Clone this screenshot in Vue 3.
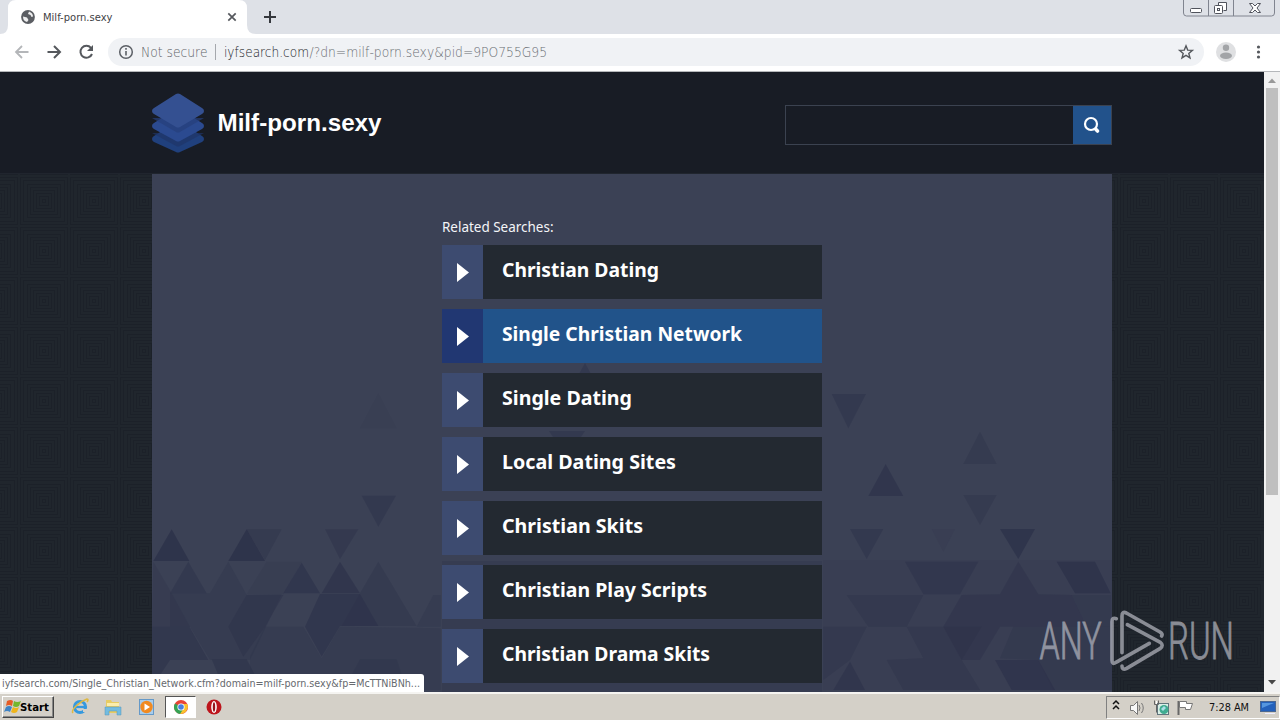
<script setup>
const results = [
  { label: 'Christian Dating', width: 157 },
  { label: 'Single Christian Network', width: 240, active: true },
  { label: 'Single Dating', width: 130 },
  { label: 'Local Dating Sites', width: 174 },
  { label: 'Christian Skits', width: 141 },
  { label: 'Christian Play Scripts', width: 205 },
  { label: 'Christian Drama Skits', width: 208 },
]
const rings = [1, 4, 8, 11, 14, 17, 20, 23]
const leftShapes = [
  ['685,100 740,205 630,205', 0.1], ['635,407 738,407 685,500', 0.5],
  ['65,508 118,603 10,603', 0.8], ['290,508 345,603 235,603', 0.8], ['290,508 395,508 345,600', 0.4],
  ['525,508 625,508 570,598', 0.45],
  ['10,605 65,700 120,800 6,800', 0.25], ['115,605 170,700 60,700', 0.5], ['235,605 290,705 395,703 300,900 180,900 120,800 60,800 60,700 180,700', 0.3],
  ['350,605 455,605 400,703 290,703', 0.18], ['455,608 510,700 400,700', 0.6], ['570,605 630,700 515,700', 0.65],
  ['685,605 800,798 575,798 630,700', 0.35], ['290,705 400,705 345,800 280,890 235,800', 0.45],
  ['510,702 630,702 685,798 570,798 515,890 465,800', 0.6], ['850,705 872,705 872,800 800,800', 0.3],
  ['6,800 118,800 175,900 60,900 30,945 6,945', 0.55], ['185,898 290,898 315,945 205,945', 0.55],
  ['345,800 460,800 515,895 570,800 872,805 872,990 300,990 300,890', 0.3], ['630,898 740,898 770,990 580,990', 0.3],
]
const rightShapes = [
  ['35,102 138,102 85,205', 0.5], ['197,312 250,408 145,408', 0.65], ['480,215 530,312 430,312', 0.4],
  ['430,405 530,405 480,495', 0.4], ['90,507 190,507 140,597', 0.5], ['540,507 645,507 595,597', 0.75],
  ['335,507 405,507 370,575', 0.15], ['255,605 475,605 420,703 310,703', 0.5], ['595,605 655,703 755,705 800,800 540,800 480,900 425,900 370,800 425,705 540,703', 0.45],
  ['710,605 825,605 872,700 765,700', 0.75], ['655,705 872,705 872,800 800,800 755,705', 0.3],
  ['80,705 310,705 260,800 145,800', 0.35], ['10,800 140,800 90,900 10,960', 0.4], ['260,800 485,800 425,900 480,990 250,990 200,900 310,895', 0.4],
  ['580,800 876,800 876,990 700,990 655,900 540,895', 0.3], ['90,905 135,990 40,990', 0.55], ['525,900 655,900 705,990 575,990', 0.6],
  ['10,600 876,600 876,990 10,990', 0.15],
]
</script>

<template>
  <div class="screen">
    <div class="tabs">
      <svg class="tabshape" width="290" height="34">
        <path d="M0 34Q8 34 8 25V8Q8 0 16 0H239Q247 0 247 8V25Q247 34 256 34Z" fill="#fff" />
        <circle cx="28" cy="17" r="6.9" fill="#5b5e63" />
        <path d="M23 16.500l4 1 1.500 2.500-1.500 2q-4-1-4-5.500zM29 11.500l-1 2.500 2.500 1 1 2 1.500-.500q0-3.500-4-5z" fill="#fff" opacity=".9" />
        <text x="43" y="21" font-size="11" textLength="69.5" lengthAdjust="spacingAndGlyphs" fill="#3f4246">Milf-porn.sexy</text>
        <path d="M228.3 13.3l7.4 7.4M235.7 13.3l-7.4 7.4" stroke="#55585d" stroke-width="1.7" />
        <path d="M264 17h12M270 11v12" stroke="#35383d" stroke-width="2" />
      </svg>
      <svg class="winctl" width="96" height="18" fill="none">
        <path d="M.5 0v13q0 3 3 3h85q3 0 3-3V0M25.500 0v16M50.500 0v16" stroke="#80848f" />
        <rect x="7.500" y="8.500" width="11" height="4" rx="1" fill="#fff" stroke="#50535c" />
        <path d="M35.500 5.500v-3h8v8h-3" fill="#fff" stroke="#50535c" />
        <rect x="31.500" y="5.500" width="8" height="8" rx="1" fill="#fff" stroke="#50535c" />
        <rect x="34.500" y="8.500" width="2" height="2" stroke="#50535c" />
        <path d="M66.500 3.500h3l2.500 2.500 2.500-2.500h3l-3.500 4.500 3.500 4.500h-3L72 10l-2.500 2.500h-3L70 8z" fill="#fff" stroke="#50535c" />
      </svg>
    </div>

    <div class="toolbar">
      <svg class="nav" width="108" height="37" fill="none">
        <path d="M28.500 18H16.500M22 12l-6 6 6 6" stroke="#b4b6b9" stroke-width="1.8" />
        <path d="M47.500 18H60M54 12l6 6-6 6" stroke="#55585d" stroke-width="2" />
        <path d="M91 13.800A6 6 0 1 0 92 20" stroke="#55585d" stroke-width="2" />
        <path d="M93 11v6h-6z" fill="#55585d" />
      </svg>
      <div class="address">
        <svg width="1096" height="28">
          <circle cx="18" cy="14" r="6.300" fill="none" stroke="#5c6066" stroke-width="1.500" />
          <path d="M18 13v4.500M18 10v1.700" stroke="#5c6066" stroke-width="1.600" />
          <text x="33" y="19" font-size="13.500" textLength="66.500" lengthAdjust="spacingAndGlyphs" fill="#5e6268">Not secure</text>
          <path d="M107.500 6v16" stroke="#a5a8ad" />
          <text x="116" y="19" font-size="13.500" textLength="85" lengthAdjust="spacingAndGlyphs" fill="#202327">iyfsearch.com</text>
          <text x="201.500" y="19" font-size="13.500" textLength="237.500" lengthAdjust="spacingAndGlyphs" fill="#696d73">/?dn=milf-porn.sexy&amp;pid=9PO755G95</text>
          <path d="M1078 7.800l1.700 4.300 4.700.3-3.600 3 1.200 4.500-4-2.500-4 2.500 1.200-4.500-3.600-3 4.700-.3z" fill="none" stroke="#55585d" stroke-width="1.400" />
        </svg>
      </div>
      <svg class="menu" width="76" height="37">
        <circle cx="22" cy="18" r="10" fill="#dfe0e2" />
        <circle cx="22" cy="13.800" r="3.200" fill="#a2a4a7" />
        <ellipse cx="22" cy="21.700" rx="6" ry="3.200" fill="#a2a4a7" />
        <g fill="#55585d"><circle cx="54.500" cy="13" r="1.600" /><circle cx="54.500" cy="18" r="1.600" /><circle cx="54.500" cy="23" r="1.600" /></g>
      </svg>
    </div>

    <div class="viewport">
      <div class="page">
        <header class="header">
          <div class="brand">
            <svg width="260" height="64">
              <path d="M0 47q0-2 2-3l22-14q2-1 4 0l22 14q2 1 2 3t-2 3L28 60q-2 1-4 0L2 50q-2-1-2-3z" fill="#20407d" />
              <path d="M0 41h52L28 54q-2 1-4 0z" fill="#203568" opacity=".7" />
              <path d="M0 34q0-2 2-3l22-14q2-1 4 0l22 14q2 1 2 3t-2 3L28 49q-2 1-4 0L2 37q-2-1-2-3z" fill="#2b4a90" />
              <path d="M0 26h52L28 40q-2 1-4 0z" fill="#263f7a" opacity=".7" />
              <path d="M0 19q0-2 2-3L24 2q2-1 4 0l22 14q2 1 2 3t-2 3L28 35q-2 1-4 0L2 22q-2-1-2-3z" fill="#345091" />
              <text class="site" x="65.500" y="39" font-size="24" textLength="164" lengthAdjust="spacingAndGlyphs" fill="#fff">Milf-porn.sexy</text>
            </svg>
          </div>
          <div class="search">
            <div class="field"></div>
            <div class="go">
              <svg width="39" height="38" fill="none" stroke="#fff">
                <circle cx="18" cy="18" r="6" stroke-width="2.200" />
                <path d="M23 23.500l1.500 1.500" stroke-width="3.600" stroke-linecap="round" />
              </svg>
            </div>
          </div>
        </header>
        <div class="body">
          <svg class="texture" width="1264" height="518">
            <defs>
              <pattern id="squares" x="19" y="2" width="50" height="50" patternUnits="userSpaceOnUse">
                <rect width="50" height="50" fill="#20262d" />
                <rect v-for="r in rings" :key="r" :x="r + 0.5" :y="r + 0.5" :width="49 - 2 * r" :height="49 - 2 * r" fill="none" stroke="#1c2129" />
              </pattern>
            </defs>
            <rect width="1264" height="518" fill="url(#squares)" />
          </svg>
          <main class="panel">
            <svg class="shards" width="960" height="518" fill="#2c3149">
              <g transform="translate(-2 186) scale(.33333)">
                <polygon v-for="(s, i) in leftShapes" :key="i" :points="s[0]" :opacity="s[1]" />
              </g>
              <g transform="translate(668 186) scale(.33333)">
                <polygon v-for="(s, i) in rightShapes" :key="i" :points="s[0]" :opacity="s[1]" />
              </g>
              <path d="M290 387h380v131H290z" opacity=".28" />
              <path d="M433 189l6 11h-12zM397 257h36l-4 6h-28z" opacity=".5" />
            </svg>
            <div class="list">
              <svg class="related" width="380" height="26"><text x="0" y="15" font-size="14" textLength="111.500" lengthAdjust="spacingAndGlyphs" fill="#f4f5f8">Related Searches:</text></svg>
              <div v-for="r in results" :key="r.label" class="row" :class="{ active: r.active }">
                <div class="arrow"><svg width="41" height="54"><path d="M15 18l12 9.500L15 37z" fill="#fff" /></svg></div>
                <svg class="label" width="339" height="54"><text x="19" y="32" font-size="20" :textLength="r.width" lengthAdjust="spacingAndGlyphs" fill="#fff">{{ r.label }}</text></svg>
              </div>
            </div>
          </main>
        </div>
      </div>
      <div class="scrollbar">
        <svg width="16" height="15"><path d="M4 11l4-4.500 4 4.500z" fill="#999" /></svg>
        <div class="thumb"></div>
        <svg class="down" width="16" height="15"><path d="M4 4h8l-4 4.500z" fill="#484848" /></svg>
      </div>
      <svg class="watermark" width="224" height="76">
        <g fill="#b3b5be" stroke="#b3b5be" stroke-width=".9">
          <text x="3.500" y="51" font-size="51.500" textLength="62" lengthAdjust="spacingAndGlyphs">ANY</text>
          <text x="132" y="51" font-size="51.500" textLength="66" lengthAdjust="spacingAndGlyphs">RUN</text>
        </g>
        <g transform="translate(-36 -18) scale(.33333)" fill="none" stroke="#b3b5be" stroke-width="11" stroke-linejoin="round" stroke-linecap="round">
          <path d="M366 188V78q0-15 13-9l101 57q9 6 5 12" />
          <path d="M349 86q-13-5-13 9v116q0 14 12 6l100-57" />
          <path d="M366 228q0 14 14 7l101-60q11-9 0-18L382 104" />
        </g>
      </svg>
      <div class="status"><svg width="424" height="18"><text x="2" y="13" font-size="10.500" textLength="418" lengthAdjust="spacingAndGlyphs" fill="#66696e">iyfsearch.com/Single_Christian_Network.cfm?domain=milf-porn.sexy&amp;fp=McTTNiBNh...</text></svg></div>
    </div>

    <footer class="taskbar">
      <div class="start">
        <svg width="50" height="20">
          <path d="M4 4q4-2 6 0L9 9Q6 7 3 9z" fill="#e65c25" /><path d="M11 4q3 2 7 0l-2 5q-3 2-6 0z" fill="#74b72d" />
          <path d="M3 10q3-2 6 0l-2 5q-3-2-6 0z" fill="#3e83c5" /><path d="M10 10q3 2 6 0l-2 5q-3 2-6 0z" fill="#efb51b" />
          <text class="bold" x="17" y="14" font-size="11" textLength="29" lengthAdjust="spacingAndGlyphs" fill="#000">Start</text>
        </svg>
      </div>
      <div class="quick">
        <svg width="30" height="24"><circle cx="15" cy="12" r="5.500" fill="none" stroke="#3599df" stroke-width="3.200" /><path d="M10 12h10" stroke="#3599df" stroke-width="2.300" /><path d="M18 14h5v3h-5z" fill="#d4d0c8" /><path d="M8 18q-2-2 3-7t11-7q2 0 0 3" fill="none" stroke="#dfb943" stroke-width="1.600" /></svg>
      </div>
      <div class="quick">
        <svg width="30" height="24"><path d="M8 5h5l1 2h7v11H8z" fill="#e7cc63" /><path d="M9 8h12v3H9z" fill="#fbedac" /><path d="M7 12h16v8h-4v-4h-8v4H7z" fill="#73bce0" stroke="#5696bb" stroke-width=".5" /></svg>
      </div>
      <div class="quick media">
        <svg width="31" height="24"><rect x="8.500" y="4.500" width="14" height="15" fill="#a8cdec" stroke="#6599c8" /><circle cx="15.500" cy="12" r="6.200" fill="#f18a20" /><path d="M13.500 8.500l5.500 3.500-5.500 3.500z" fill="#fff" /></svg>
      </div>
      <div class="quick selected">
        <svg width="30" height="20"><circle cx="15" cy="10" r="7" fill="#e84436" /><path d="M15 10L9 6.400A7 7 0 0 0 15 17l3-5z" fill="#35a354" /><path d="M15 10h6.500Q21 17 14 17l4-6z" fill="#f9c22c" /><path d="M15 7h6.300Q22 9 21.800 11L15 17l3-6z" fill="#f9c22c" /><circle cx="15" cy="10" r="3.600" fill="#fff" /><circle cx="15" cy="10" r="2.800" fill="#477fe0" /></svg>
      </div>
      <div class="quick">
        <svg width="36" height="24"><circle cx="18" cy="12" r="7.500" fill="#bd151c" /><ellipse cx="18" cy="12" rx="2.800" ry="6" fill="#fff" /><ellipse cx="18" cy="12" rx="1.200" ry="4.700" fill="#96141b" /></svg>
      </div>
      <div class="tray">
        <svg width="172" height="21">
          <path d="M6 8l3-3 3 3M6 13l3-3 3 3" transform="translate(0 -1)" stroke="#111" stroke-width="1.500" fill="none" />
          <path d="M23.500 8.500h3l4-4v13l-4-4h-3z" fill="#f8f8f8" stroke="#777" /><path d="M32 8q2 3 0 6M34.500 6q3.500 5 0 10" fill="none" stroke="#777" />
          <rect x="50.500" y="6.500" width="11" height="11" fill="#d9eee6" stroke="#61757d" /><circle cx="57" cy="12.500" r="4.500" fill="#40ac91" /><path d="M54 12l3-3 2 2-3 3z" fill="#acdfe8" /><path d="M47.500 3.500v4h2v8M51.500 3.500v4h-2" fill="none" stroke="#646464" /><path d="M49.500 4v3" stroke="#fff" />
          <path d="M71.500 4v14" stroke="#686868" stroke-width="2" /><path d="M72.500 4.500h7v2h6l-2 6h-5v-2h-6z" fill="#fff" stroke="#777" />
          <text x="102" y="14" font-size="11" textLength="40" lengthAdjust="spacingAndGlyphs" fill="#111">7:28 AM</text>
          <rect x="153.500" y="4.500" width="15" height="10" fill="#2461bb" stroke="#4a6792" /><path d="M155 6h12l-12 5z" fill="#5596df" /><path d="M158 16h10v1h-10z" fill="#eef" />
        </svg>
      </div>
    </footer>
  </div>
</template>

<style>
body { margin: 0; overflow: hidden; }
</style>
<style scoped>
.screen { width: 1280px; height: 720px; display: flex; flex-direction: column; overflow: hidden; font-family: "Noto Sans", "DejaVu Sans", sans-serif; }
svg { display: block; }
.tabs { height: 34px; background: #dee1e7; display: flex; justify-content: space-between; flex: none; }
.winctl { margin-right: 1px; }
.tabshape text, .status text, .tray text { font-family: "DejaVu Sans", sans-serif; }
.toolbar { height: 37px; background: #fff; border-bottom: 1px solid #b5b7ba; display: flex; flex: none; }
.address { width: 1096px; height: 28px; margin-top: 4px; border-radius: 14px; background: #f0f2f5; }
.address text { font-weight: 300; font-family: "DejaVu Sans", sans-serif; font-weight: 200; }
.viewport { position: relative; height: 620px; display: flex; flex: none; overflow: hidden; }
.page { width: 1264px; height: 620px; }
.page, .header, .body, .search, .row { box-sizing: border-box; }
.header { height: 102px; background: #181c25; border-bottom: 1px solid #20252e; display: flex; justify-content: space-between; padding: 0 152px; }
.brand { padding-top: 20px; }
.site { font-family: "Liberation Sans", sans-serif; font-weight: 700; }
.search { margin-top: 33px; width: 327px; height: 40px; border: 1px solid #3b4250; display: flex; }
.field { width: 287px; }
.go { flex: 1; background: #22528b; overflow: hidden; }
.body { position: relative; height: 518px; padding: 0 152px; }
.texture, .shards { position: absolute; left: 0; top: 0; }
.panel { position: relative; width: 960px; height: 518px; background: #3b4155; overflow: hidden; }
.list { position: relative; width: 380px; margin: 0 auto; padding-top: 43px; display: flex; flex-direction: column; }
.related { margin-bottom: 2px; font-weight: 400; }
.row { height: 54px; display: flex; margin-bottom: 10px; background: #232931; }
.arrow { width: 41px; background: #3d4b70; }
.label { font-weight: 700; }
.active { background: #21538a; }
.active .arrow { background: #213772; }
.scrollbar { width: 16px; height: 620px; background: #f1f1f1; display: flex; flex-direction: column; }
.thumb { width: 12px; height: 407px; margin: 1px 2px; background: #bfbfbf; }
.down { margin-top: auto; margin-bottom: 1px; }
.watermark { position: absolute; left: 1036px; top: 536px; opacity: .72; font-family: Roboto, sans-serif; font-weight: 300; }
.status { position: absolute; left: 0; bottom: 0; width: 424px; height: 18px; background: #fff; border-top-right-radius: 3px; }
.taskbar { height: 28px; background: #d4d0c8; border-top: 2px solid #f5f4f1; box-sizing: border-box; display: flex; align-items: center; padding: 0 0 0 2px; flex: none; }
.start { width: 50px; height: 20px; border: 1px solid; border-color: #fff #444 #444 #fff; box-shadow: inset -1px -1px #888; margin-right: 11px; }
.bold { font-family: "DejaVu Sans", sans-serif; font-weight: 700; }
.quick { height: 24px; margin-right: 3px; }
.quick.media { margin-right: 3px; }
.quick.selected { width: 29px; height: 20px; margin: 0; background: #fff; border: 1px solid; border-color: #555 #fff #fff #555; }
.tray { margin-left: auto; width: 172px; height: 21px; border: 1px solid; border-color: #808080 #fff #fff #808080; }
</style>
